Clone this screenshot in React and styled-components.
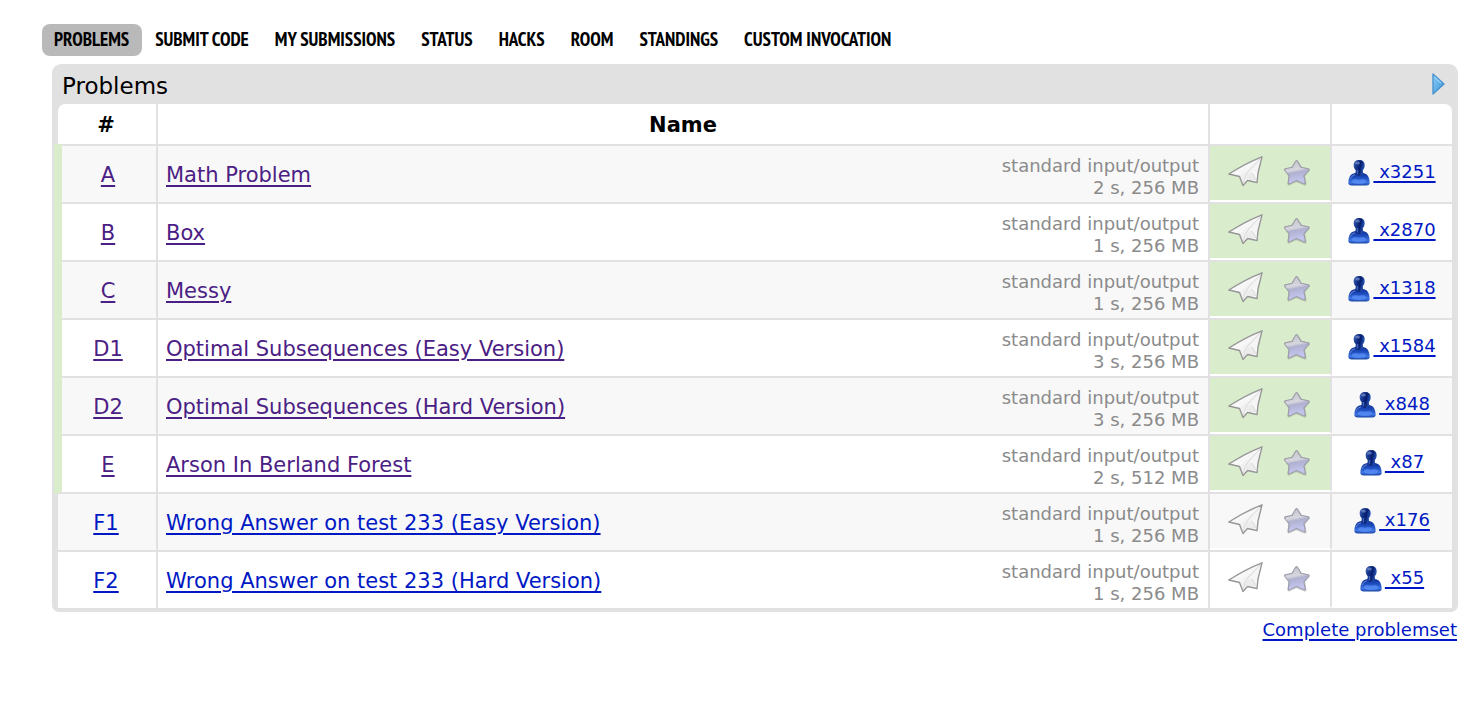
import React from "react";
import styled, { createGlobalStyle } from "styled-components";

const line = "#e1e1e1";
const accepted = "#d9eccc";

const GlobalStyle = createGlobalStyle`
  body {
    margin: 0;
    background: #fff;
    color: #000;
    font-family: Verdana, "DejaVu Sans", sans-serif;
  }
`;

const Page = styled.main`
  padding: 24px 16px 64px 42px;
`;

const Menu = styled.nav`
  display: flex;
  flex-wrap: wrap;
  gap: 1px;
`;

const MenuLink = styled.a`
  padding: 0 13px 2px 12px;
  border-radius: 8px;
  background: ${(p) => (p.$active ? "#b9b9b9" : "transparent")};
  color: #000;
  font: bold 19px/30px "PT Sans Narrow", "Liberation Sans Narrow", "Liberation Sans", sans-serif;
  text-decoration: none;
  text-transform: uppercase;
  white-space: nowrap;
`;

const Panel = styled.section`
  margin: 8px 0 0 10px;
  padding: 0 6px 4px;
  border-radius: 9px 9px 7px 7px;
  background: ${line};
`;

const Caption = styled.header`
  display: flex;
  align-items: center;
  justify-content: space-between;
  height: 40px;
  padding: 0 6px 0 4px;
`;

const Title = styled.h1`
  margin: 0;
  font-size: 23px;
  font-weight: normal;
  line-height: 28px;
  padding-top: 4px;
`;

const Expand = styled.button`
  display: flex;
  padding: 0;
  border: 0;
  background: none;
`;

const Grid = styled.table`
  width: 100%;
  table-layout: fixed;
  border-collapse: separate;
  border-spacing: 0;
`;

const Column = styled.col`
  width: ${(p) => p.$width};
`;

const Head = styled.th`
  box-sizing: border-box;
  height: 40px;
  padding: 2px 0 0;
  border-right: 2px solid ${line};
  background: #fff;
  font-size: 21px;
  line-height: 26px;

  &:first-child {
    padding-right: 2px;
    border-top-left-radius: 7px;
  }
  &:last-child {
    border-right: 0;
    border-top-right-radius: 7px;
  }
`;

const Row = styled.tr`
  background: #fff;

  &:nth-child(odd) {
    background: #f8f8f8;
  }
`;

const Cell = styled.td`
  box-sizing: border-box;
  height: 58px;
  padding: 0;
  border-top: 2px solid ${line};
  border-right: 2px solid ${line};

  &:last-child {
    border-right: 0;
  }
`;

const IndexCell = styled(Cell)`
  position: relative;
  padding: ${(p) => (p.$solved ? "2px 0 0 2px" : "2px 2px 0 0")};
  text-align: center;

  &::before {
    content: "";
    display: ${(p) => (p.$solved ? "block" : "none")};
    position: absolute;
    inset: -2px auto -2px -4px;
    width: 8px;
    background: ${accepted};
  }
`;

const ProblemLink = styled.a`
  color: ${(p) => (p.$visited ? "#4b2084" : "#0018c4")};
  font-size: 21px;
  line-height: 28px;
  text-decoration-thickness: 2px;
  text-underline-offset: 3px;
`;

const NameLayout = styled.div`
  display: flex;
  align-items: center;
  justify-content: space-between;
  padding: 2px 9px 0 8px;
`;

const Limits = styled.div`
  padding-top: 4px;
  color: #8b8b8b;
  font-size: 18px;
  line-height: 22px;
  text-align: right;
`;

const ActionCell = styled(Cell)`
  background: ${(p) => (p.$solved ? accepted : "transparent")};
  border-bottom: 2px solid #fff;
`;

const Actions = styled.div`
  display: flex;
  align-items: center;
  justify-content: center;
  gap: 20px;
`;

const IconButton = styled.button`
  display: flex;
  padding: 0;
  border: 0;
  background: none;
`;

const Solvers = styled.div`
  display: flex;
  align-items: center;
  justify-content: center;
  gap: 2px;
  padding-bottom: 4px;
`;

const SmallLink = styled.a`
  color: #0018c4;
  font-size: 18px;
  line-height: 24px;
  text-decoration-thickness: 2px;
  text-underline-offset: 3px;
  white-space: pre;
`;

const Footer = styled.footer`
  padding: 6px 1px 0 0;
  text-align: right;
`;

const PlaneIcon = () => (
  <svg width="36" height="34" viewBox="0 0 36 34" aria-hidden="true">
    <defs>
      <linearGradient id="paper" x1="0" y1="0" x2="1" y2="1">
        <stop offset="0" stopColor="#ffffff" />
        <stop offset="0.6" stopColor="#f4f4f4" />
        <stop offset="1" stopColor="#ffffff" />
      </linearGradient>
    </defs>
    <path d="M34 .8Q18 7 .8 18L11.500 20.500L15 29.500L19.500 24.500L29 26.500L30 17Z" fill="url(#paper)" />
    <path d="M11.500 20.500L32 3L21 15Q17 18 16.500 22L15 29Z" fill="#f0f0f0" />
    <path d="M17 23Q19 16.500 24 17.500Q27 19 27.500 24.500L20 24Z" fill="#ececec" />
    <path d="M32 3L20 16Q16.500 20 15.500 27M23 17Q27 19 27.500 24" fill="none" stroke="#d9d9d9" strokeWidth="1" />
    <path d="M34 .8Q18 7 .8 18L11.500 20.500L15 29.500L19.500 24.500L29 26.500L30 17Z" fill="none" stroke="#979797" strokeWidth="1.400" strokeLinejoin="round" />
  </svg>
);

const StarIcon = () => (
  <svg width="28" height="28" viewBox="0 0 28 28" aria-hidden="true">
    <defs>
      <linearGradient id="star" x1="0" y1="0" x2="0.2" y2="1">
        <stop offset="0" stopColor="#c4c4ca" />
        <stop offset="0.45" stopColor="#d6d6de" />
        <stop offset="0.58" stopColor="#b0b1d0" />
        <stop offset="1" stopColor="#c3c5ee" />
      </linearGradient>
    </defs>
    <path d="M13 3L17 9.500L24.500 11L19.500 16.500L21 25L12.500 21.500L5 25L6 16.500L1.500 11L9 9.500Z" fill="#666" stroke="#666" strokeWidth="3" strokeLinejoin="round" opacity="0.3" />
    <path d="M12.500 2.500L16.500 9L24 10.500L19 16.500L20.500 24L12.500 20.500L5 24L6 16.500L1.500 10.500L8.500 9Z" fill="#9d9daa" stroke="#9d9daa" strokeWidth="2.800" strokeLinejoin="round" />
    <path d="M12.500 3L16.300 9.500L23.500 11L18.500 16.500L20 23.500L12.500 20.200L5.500 23.500L6.500 16.500L2 11L8.800 9.500Z" fill="url(#star)" stroke="url(#star)" strokeWidth="1.400" strokeLinejoin="round" />
  </svg>
);

const UserIcon = () => (
  <svg width="23" height="28" viewBox="0 -2 23 28" aria-hidden="true">
    <defs>
      <linearGradient id="head" x1="0" y1="0" x2="1" y2="0.3">
        <stop offset="0" stopColor="#4d6db4" />
        <stop offset="0.3" stopColor="#1a3b94" />
        <stop offset="0.65" stopColor="#051c6c" />
        <stop offset="1" stopColor="#2856b4" />
      </linearGradient>
      <linearGradient id="torso" x1="0" y1="0" x2="0" y2="1">
        <stop offset="0" stopColor="#0a2482" />
        <stop offset="0.45" stopColor="#1b49ba" />
        <stop offset="0.8" stopColor="#3f74e0" />
        <stop offset="1" stopColor="#1c47a6" />
      </linearGradient>
    </defs>
    <path d="M8 10.500L14.500 10.500L15 13Q19 13.500 20.500 17Q22 20.500 21.700 23.500Q21 25.500 18.500 25.500L3.500 25.500Q1 25.500 .3 23.500Q0 20.500 1.500 17Q3 13.500 7.500 13Z" fill="url(#torso)" />
    <path d="M5.600 5.500Q5.600 0 11.200 0Q16.700 0 16.700 5.500Q16.700 8.500 14.700 10.500L14.700 14.500Q11 17 7.800 14.500L7.800 10.500Q5.600 8.500 5.600 5.500Z" fill="url(#head)" />
    <ellipse cx="9.500" cy="3" rx="2.400" ry="1.600" fill="#8fa7d8" opacity="0.55" />
    <path d="M9.500 10V14.500" stroke="#3f65b8" strokeWidth="1.500" />
    <path d="M3.500 21.500Q5 18.500 8 19.300Q11 20 14 19.300Q17 18.500 18.500 21.500Q17 24 11 24Q5 24 3.500 21.500Z" fill="#5b92fa" opacity="0.7" />
    <path d="M2 19Q3.500 15.500 7 14.700" fill="none" stroke="#6583c8" strokeWidth="1" />
  </svg>
);

const ArrowIcon = () => (
  <svg width="14" height="22" viewBox="0 0 14 22" aria-hidden="true">
    <defs>
      <linearGradient id="arrow" x1="0" y1="0" x2="1" y2="1">
        <stop offset="0" stopColor="#8ccaf2" />
        <stop offset="0.5" stopColor="#62b2e8" />
        <stop offset="1" stopColor="#2b7dc2" />
      </linearGradient>
    </defs>
    <path d="M1 1L12 11L1 21Z" fill="url(#arrow)" stroke="#4a94d2" strokeWidth="1.400" strokeLinejoin="round" />
    <path d="M2.500 4L9 10" stroke="#b5e0fa" strokeWidth="1" />
  </svg>
);

const menu = [
  "Problems",
  "Submit code",
  "My submissions",
  "Status",
  "Hacks",
  "Room",
  "Standings",
  "Custom invocation",
];

const problems = [
  { id: "A", name: "Math Problem", limits: "2 s, 256 MB", solvers: 3251, solved: true },
  { id: "B", name: "Box", limits: "1 s, 256 MB", solvers: 2870, solved: true },
  { id: "C", name: "Messy", limits: "1 s, 256 MB", solvers: 1318, solved: true },
  { id: "D1", name: "Optimal Subsequences (Easy Version)", limits: "3 s, 256 MB", solvers: 1584, solved: true },
  { id: "D2", name: "Optimal Subsequences (Hard Version)", limits: "3 s, 256 MB", solvers: 848, solved: true },
  { id: "E", name: "Arson In Berland Forest", limits: "2 s, 512 MB", solvers: 87, solved: true },
  { id: "F1", name: "Wrong Answer on test 233 (Easy Version)", limits: "1 s, 256 MB", solvers: 176, solved: false },
  { id: "F2", name: "Wrong Answer on test 233 (Hard Version)", limits: "1 s, 256 MB", solvers: 55, solved: false },
];

const ProblemRow = ({ problem }) => (
  <Row>
    <IndexCell $solved={problem.solved}>
      <ProblemLink href={`#${problem.id}`} $visited={problem.solved}>{problem.id}</ProblemLink>
    </IndexCell>
    <Cell>
      <NameLayout>
        <ProblemLink href={`#${problem.id}`} $visited={problem.solved}>{problem.name}</ProblemLink>
        <Limits>
          <div>standard input/output</div>
          <div>{problem.limits}</div>
        </Limits>
      </NameLayout>
    </Cell>
    <ActionCell $solved={problem.solved}>
      <Actions>
        <IconButton type="button" aria-label={`Submit ${problem.id}`}><PlaneIcon /></IconButton>
        <IconButton type="button" aria-label={`Add ${problem.id} to favourites`}><StarIcon /></IconButton>
      </Actions>
    </ActionCell>
    <Cell>
      <Solvers>
        <UserIcon />
        <SmallLink href={`#status-${problem.id}`}>{` x${problem.solvers}`}</SmallLink>
      </Solvers>
    </Cell>
  </Row>
);

export default function App() {
  return (
    <>
      <GlobalStyle />
      <Page>
        <Menu>
          {menu.map((label, i) => (
            <MenuLink key={label} href="#menu" $active={i === 0}>{label}</MenuLink>
          ))}
        </Menu>
        <Panel>
          <Caption>
            <Title>Problems</Title>
            <Expand type="button" aria-label="Expand"><ArrowIcon /></Expand>
          </Caption>
          <Grid>
            <colgroup>
              <Column $width="100px" />
              <Column $width="auto" />
              <Column $width="122px" />
              <Column $width="120px" />
            </colgroup>
            <thead>
              <tr>
                <Head>#</Head>
                <Head>Name</Head>
                <Head />
                <Head />
              </tr>
            </thead>
            <tbody>
              {problems.map((problem) => (
                <ProblemRow key={problem.id} problem={problem} />
              ))}
            </tbody>
          </Grid>
        </Panel>
        <Footer>
          <SmallLink href="#problemset">Complete problemset</SmallLink>
        </Footer>
      </Page>
    </>
  );
}
